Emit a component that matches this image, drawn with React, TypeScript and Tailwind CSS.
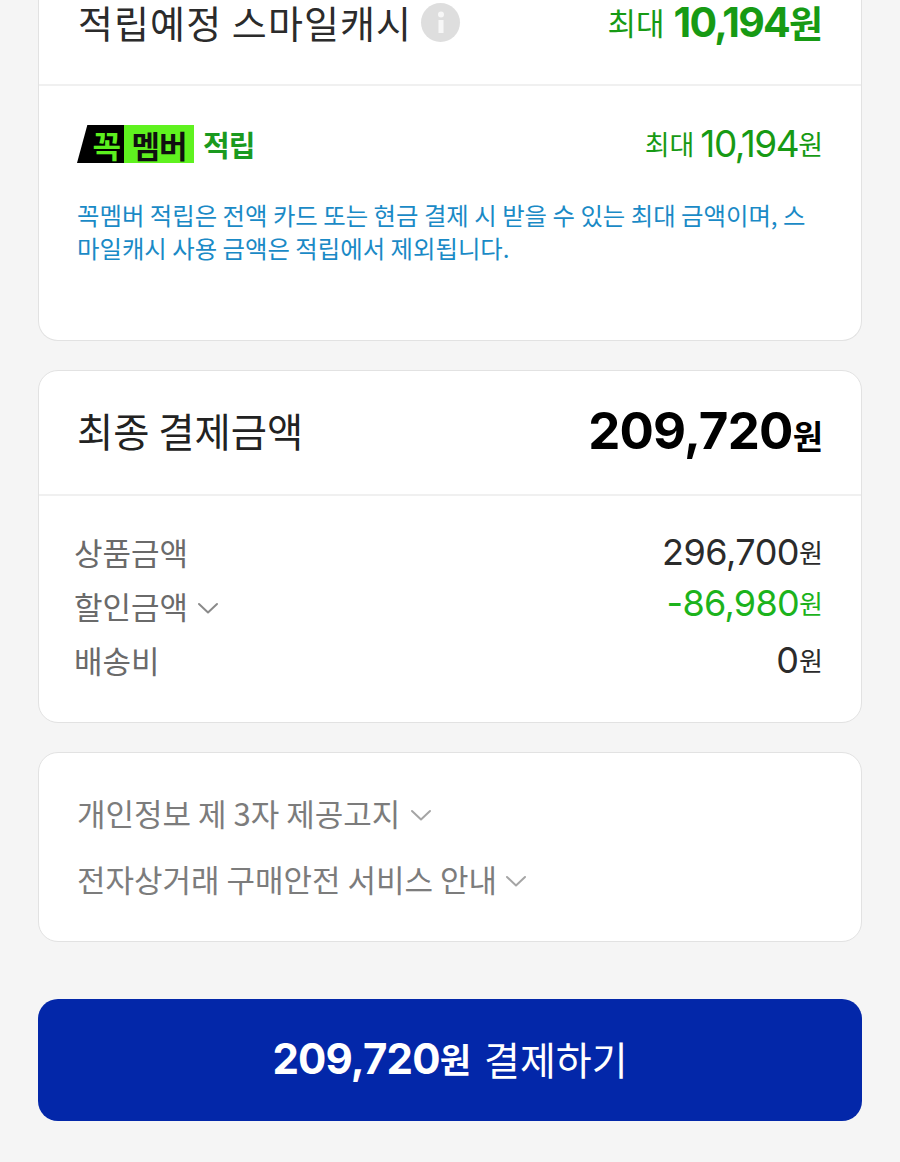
const font = { fontFamily: '"Noto Sans CJK KR", Inter, sans-serif' };
const num = 'font-[Inter,sans-serif]';

function Chevron({ className }: { className: string }) {
  return (
    <svg className={className} viewBox="0 0 22 12" fill="none" stroke="currentColor" strokeWidth="2" strokeLinecap="round" strokeLinejoin="round">
      <path d="M2 2l9 8.5L20 2" />
    </svg>
  );
}

export default function App() {
  return (
    <div style={font} className="h-[1162px] w-[900px] overflow-hidden bg-[#f5f5f5] px-[38px]">
      <section className="h-[341px] rounded-b-[20px] border border-t-0 border-[#e2e2e2] bg-white">
        <div className="flex h-[86px] items-start justify-between border-b-2 border-[#f0f0f0] pl-[39px] pr-[38px]">
          <div className="flex h-[44px] items-center">
            <span className="whitespace-nowrap text-[38px] leading-[44px] tracking-[1.1px] text-[#2b2b2b]">적립예정 스마일캐시</span>
            <span className="ml-[9px] flex h-[39px] w-[39px] items-center justify-center rounded-full bg-[#dedede]">
              <svg width="12" height="24" viewBox="0 0 12 24" fill="#f7f7f7">
                <circle cx="6" cy="4.5" r="3" />
                <rect x="3.5" y="10" width="5" height="13" />
              </svg>
            </span>
          </div>
          <div className="flex h-[44px] items-center text-[#179a14]">
            <span className="mr-[9px] whitespace-nowrap text-[31px] leading-[44px]">최대</span>
            <span className={`${num} text-[41px] font-bold leading-[44px] tracking-[-1.8px]`}>10,194</span>
            <span className="text-[37px] font-bold leading-[44px]">원</span>
          </div>
        </div>
        <div className="px-[38px]">
          <div className="mt-[38px] flex h-[40px] items-center justify-between">
            <div className="flex items-center">
              <span className="flex h-[38px] w-[47px] items-center justify-end bg-black pr-[4px] text-[31px] font-bold leading-none tracking-[-1px] text-[#5cf01e] [clip-path:polygon(22%_0,100%_0,100%_100%,0_100%)]">꼭</span>
              <span className="flex h-[38px] w-[70px] items-center justify-center bg-[#5ff21f] text-[31px] font-bold leading-none tracking-[-1px] text-[#101010]">멤버</span>
              <span className="ml-[9px] text-[29px] font-bold leading-none tracking-[-1px] text-[#1a9a1f]">적립</span>
            </div>
            <div className="flex items-center text-[#179a14]">
              <span className="mr-[6px] text-[27px] leading-[40px]">최대</span>
              <span className={`${num} text-[37px] leading-[40px] tracking-[-1.5px]`}>10,194</span>
              <span className="text-[27px] leading-[40px]">원</span>
            </div>
          </div>
          <p className="mt-[34px] text-[24.4px] leading-[33px] text-[#1a8ac6]">
            꼭멤버 적립은 전액 카드 또는 현금 결제 시 받을 수 있는 최대 금액이며, 스마일캐시 사용 금액은 적립에서 제외됩니다.
          </p>
        </div>
      </section>

      <section className="mt-[29px] h-[353px] rounded-[20px] border border-[#e2e2e2] bg-white">
        <div className="flex h-[125px] items-center justify-between border-b-2 border-[#f0f0f0] pb-[5px] pl-[38px] pr-[38px]">
          <span className="text-[39.4px] text-[#222]">최종 결제금액</span>
          <div className="flex items-baseline font-bold text-black">
            <span className={`${num} text-[51px] leading-none tracking-[-0.8px]`}>209,720</span>
            <span className="text-[33px] leading-none">원</span>
          </div>
        </div>
        <div className="flex flex-col pl-[35px] pr-[38px] pt-[29px] text-[31px] leading-[54px]">
          <div className="flex h-[54px] items-center justify-between">
            <span className="text-[#6a6a6a]">상품금액</span>
            <span className="flex items-center text-[#2b2b2b]">
              <span className={`${num} text-[36px] tracking-[-0.5px]`}>296,700</span>
              <span className="text-[26px]">원</span>
            </span>
          </div>
          <div className="flex h-[54px] items-center justify-between">
            <span className="flex items-center text-[#6a6a6a]">
              할인금액
              <Chevron className="ml-[9px] mt-[3px] h-[12px] w-[22px] text-[#8a8a8a]" />
            </span>
            <span className="mb-[6px] flex items-center text-[#1cb31c]">
              <span className={`${num} text-[36px] tracking-[-0.7px]`}>-86,980</span>
              <span className="text-[26px]">원</span>
            </span>
          </div>
          <div className="flex h-[54px] items-center justify-between">
            <span className="text-[#6a6a6a]">배송비</span>
            <span className="flex items-center text-[#2b2b2b]">
              <span className={`${num} text-[36px]`}>0</span>
              <span className="text-[26px]">원</span>
            </span>
          </div>
        </div>
      </section>

      <section className="mt-[29px] flex h-[190px] flex-col gap-[22px] rounded-[20px] border border-[#e2e2e2] bg-white pl-[38px] pt-[38px] text-[31px] leading-[44px] text-[#7c7c7c]">
        <div className="flex items-center">
          개인정보 제 3자 제공고지
          <Chevron className="ml-[10px] mt-[3px] h-[12px] w-[22px] text-[#a5a5a5]" />
        </div>
        <div className="flex items-center">
          전자상거래 구매안전 서비스 안내
          <Chevron className="ml-[8px] mt-[3px] h-[12px] w-[22px] text-[#a5a5a5]" />
        </div>
      </section>

      <button className="mt-[57px] flex h-[122px] w-full items-center justify-center rounded-[20px] bg-[#0327a9] pb-[4px] text-white">
        <span className={`${num} text-[42px] font-bold tracking-[-0.8px]`}>209,720</span>
        <span className="text-[34px] font-bold">원</span>
        <span className="ml-[13px] text-[39px]">결제하기</span>
      </button>
    </div>
  );
}
